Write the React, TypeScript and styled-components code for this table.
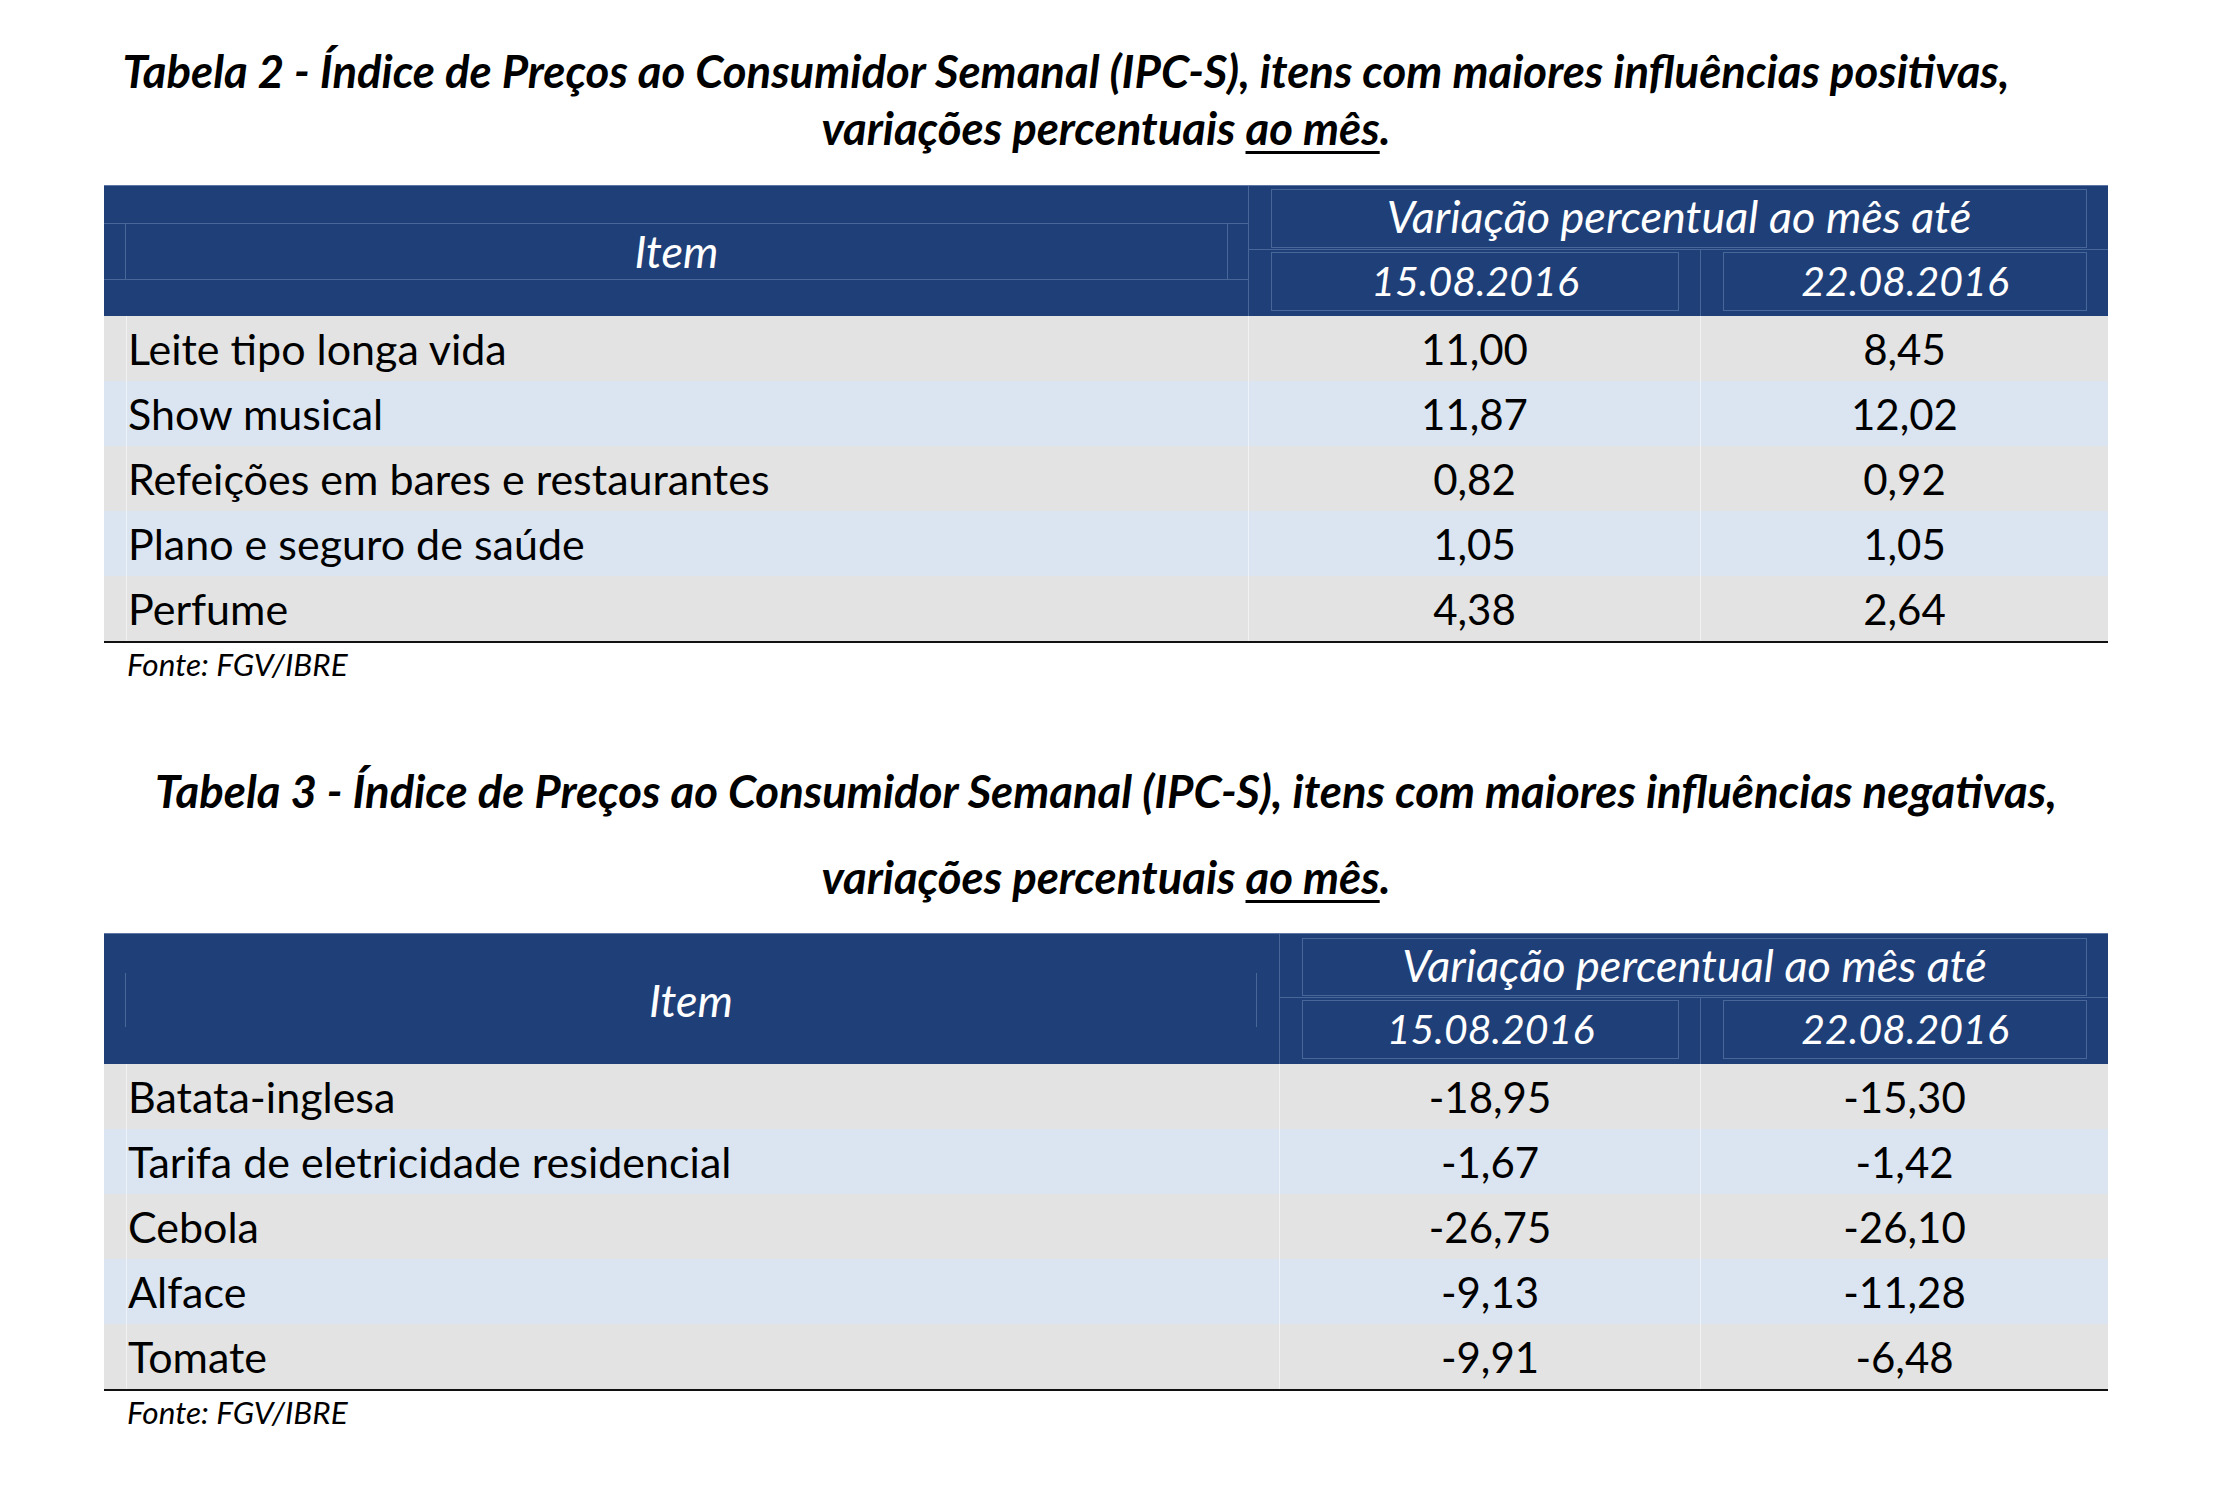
import React from "react";
import styled, { createGlobalStyle } from "styled-components";

const FONT = `Lato, "Open Sans", "Liberation Sans", sans-serif`;
const LINE = "rgba(140, 165, 205, 0.38)";
const FAINT = "rgba(255, 255, 255, 0.5)";

const Global = createGlobalStyle`
  html, body { margin: 0; padding: 0; background: #ffffff; }
  body { font-family: ${FONT}; color: #000; }
`;

const Page = styled.div`
  width: 2238px;
  box-sizing: border-box;
  padding: 42px 0 40px 104px;
`;

const Content = styled.div`
  width: 2004px;
  display: flex;
  flex-direction: column;
`;

const Title = styled.h2<{ $lh: number; $mt: number }>`
  margin: ${(p) => p.$mt}px 0 0 0;
  font-family: ${FONT};
  font-style: italic;
  font-weight: 700;
  font-size: 45.5px;
  line-height: ${(p) => p.$lh}px;
  text-align: center;
  color: #000;
`;

const TitleLine = styled.span<{ $shift?: number }>`
  display: block;
  padding-right: ${(p) => p.$shift ?? 0}px;
  white-space: nowrap;
`;

const Under = styled.span`
  text-decoration: underline;
  text-decoration-thickness: 3px;
  text-underline-offset: 6px;
`;

const TableBox = styled.div<{ $mt: number }>`
  margin-top: ${(p) => p.$mt}px;
  width: 2004px;
  border-bottom: 2px solid #111;
`;

const Header = styled.div<{ $cols: string; $rows: string }>`
  display: grid;
  grid-template-columns: ${(p) => p.$cols};
  grid-template-rows: ${(p) => p.$rows};
  background: #1f3f78;
  color: #fff;
  border-top: 1px solid #5d76a3;
  box-sizing: border-box;
`;

const ItemCell = styled.div<{ $pt: number; $pb: number }>`
  grid-row: 1 / 3;
  grid-column: 1;
  display: flex;
  flex-direction: column;
  padding: ${(p) => p.$pt}px 0 ${(p) => p.$pb}px 0;
`;

const ItemFrame = styled.div<{ $framed: boolean }>`
  flex: 1;
  display: flex;
  border-top: 1px solid ${(p) => (p.$framed ? LINE : "transparent")};
  border-bottom: 1px solid ${(p) => (p.$framed ? LINE : "transparent")};
`;

const ItemInner = styled.div<{ $ml: number; $mr: number }>`
  flex: 1;
  margin: 0 ${(p) => p.$mr}px 0 ${(p) => p.$ml}px;
  border-left: 1px solid ${LINE};
  border-right: 1px solid ${LINE};
  display: flex;
  align-items: center;
  justify-content: center;
`;

const HeadText = styled.span<{ $size: number }>`
  font-family: ${FONT};
  font-style: italic;
  font-weight: 400;
  font-size: ${(p) => p.$size}px;
  line-height: 1;
  color: #fff;
  white-space: nowrap;
`;

const GroupCell = styled.div<{ $mt: number; $mb: number; $ml: number }>`
  grid-row: 1;
  grid-column: 2 / 4;
  display: flex;
  border-left: 1px solid ${LINE};
  padding: ${(p) => p.$mt}px 21px ${(p) => p.$mb}px ${(p) => p.$ml}px;
`;

const GroupInner = styled.div`
  flex: 1;
  border-top: 1px solid ${LINE};
  border-bottom: 1px solid ${LINE};
  border-left: 1px solid ${LINE};
  border-right: 1px solid ${LINE};
  display: flex;
  align-items: center;
  justify-content: center;
  padding-bottom: 4px;
`;

const DateCell = styled.div<{ $col: number; $ml: number }>`
  grid-row: 2;
  grid-column: ${(p) => p.$col};
  display: flex;
  border-left: 1px solid ${LINE};
  border-top: 1px solid ${LINE};
  padding: 2px 21px 5px ${(p) => p.$ml}px;
`;

const DateInner = styled.div`
  flex: 1;
  border-left: 1px solid ${LINE};
  border-right: 1px solid ${LINE};
  border-top: 1px solid ${LINE};
  border-bottom: 1px solid ${LINE};
  display: flex;
  align-items: center;
  justify-content: center;
  padding-bottom: 2px;
`;

const Row = styled.div<{ $cols: string; $alt: boolean }>`
  display: grid;
  grid-template-columns: ${(p) => p.$cols};
  height: 65px;
  background: ${(p) => (p.$alt ? "#dbe5f1" : "#e3e3e3")};
`;

const LabelCell = styled.div`
  display: flex;
  align-items: center;
  padding-left: 22px;
  box-sizing: border-box;
`;

const LabelInner = styled.div`
  flex: 1;
  height: 100%;
  display: flex;
  align-items: center;
  padding-left: 1px;
  border-left: 1px solid ${FAINT};
  font-family: ${FONT};
  font-size: 43px;
  white-space: nowrap;
`;

const NumCell = styled.div`
  display: flex;
  align-items: center;
  justify-content: center;
  border-left: 1px solid ${FAINT};
  font-family: ${FONT};
  font-size: 42px;
  white-space: nowrap;
`;

const Source = styled.div`
  margin-top: 5px;
  padding-left: 23px;
  font-family: ${FONT};
  font-style: italic;
  font-size: 31.5px;
  line-height: 32px;
`;

type Item = { label: string; a: string; b: string };

type TableProps = {
  cols: string;
  mt: number;
  itemFramed: boolean;
  itemPt: number;
  itemPb: number;
  itemMr: number;
  groupMt: number;
  groupMb: number;
  rows: Item[];
};

function DataTable(p: TableProps) {
  return (
    <>
      <TableBox $mt={p.mt}>
        <Header $cols={p.cols} $rows="63px 67px">
          <ItemCell $pt={p.itemPt} $pb={p.itemPb}>
            <ItemFrame $framed={p.itemFramed}>
              <ItemInner $ml={21} $mr={p.itemMr}>
                <HeadText $size={45}>Item</HeadText>
              </ItemInner>
            </ItemFrame>
          </ItemCell>
          <GroupCell $mt={p.groupMt} $mb={p.groupMb} $ml={22}>
            <GroupInner>
              <HeadText $size={45}>Variação percentual ao mês até</HeadText>
            </GroupInner>
          </GroupCell>
          <DateCell $col={2} $ml={22}>
            <DateInner>
              <HeadText $size={41}>15.08.2016</HeadText>
            </DateInner>
          </DateCell>
          <DateCell $col={3} $ml={22}>
            <DateInner>
              <HeadText $size={41}>22.08.2016</HeadText>
            </DateInner>
          </DateCell>
        </Header>
        {p.rows.map((r, i) => (
          <Row key={r.label} $cols={p.cols} $alt={i % 2 === 1}>
            <LabelCell>
              <LabelInner>{r.label}</LabelInner>
            </LabelCell>
            <NumCell>{r.a}</NumCell>
            <NumCell>{r.b}</NumCell>
          </Row>
        ))}
      </TableBox>
      <Source>Fonte: FGV/IBRE</Source>
    </>
  );
}

const positive: Item[] = [
  { label: "Leite tipo longa vida", a: "11,00", b: "8,45" },
  { label: "Show musical", a: "11,87", b: "12,02" },
  { label: "Refeições em bares e restaurantes", a: "0,82", b: "0,92" },
  { label: "Plano e seguro de saúde", a: "1,05", b: "1,05" },
  { label: "Perfume", a: "4,38", b: "2,64" },
];

const negative: Item[] = [
  { label: "Batata-inglesa", a: "-18,95", b: "-15,30" },
  { label: "Tarifa de eletricidade residencial", a: "-1,67", b: "-1,42" },
  { label: "Cebola", a: "-26,75", b: "-26,10" },
  { label: "Alface", a: "-9,13", b: "-11,28" },
  { label: "Tomate", a: "-9,91", b: "-6,48" },
];

export default function App() {
  return (
    <>
      <Global />
      <Page>
        <Content>
          <Title $lh={57} $mt={0}>
            <TitleLine $shift={80}>
              Tabela 2 - Índice de Preços ao Consumidor Semanal (IPC-S), itens com maiores influências positivas,
            </TitleLine>
            <TitleLine>
              variações percentuais <Under>ao mês</Under>.
            </TitleLine>
          </Title>
          <DataTable
            cols="1144px 452px 408px"
            mt={29}
            itemFramed={true}
            itemPt={37}
            itemPb={36}
            itemMr={20}
            groupMt={3}
            groupMb={1}
            rows={positive}
          />
          <Title $lh={86} $mt={68}>
            <TitleLine>
              Tabela 3 - Índice de Preços ao Consumidor Semanal (IPC-S), itens com maiores influências negativas,
            </TitleLine>
            <TitleLine>
              variações percentuais <Under>ao mês</Under>.
            </TitleLine>
          </Title>
          <DataTable
            cols="1175px 421px 408px"
            mt={13}
            itemFramed={false}
            itemPt={38}
            itemPb={36}
            itemMr={22}
            groupMt={4}
            groupMb={1}
            rows={negative}
          />
        </Content>
      </Page>
    </>
  );
}
